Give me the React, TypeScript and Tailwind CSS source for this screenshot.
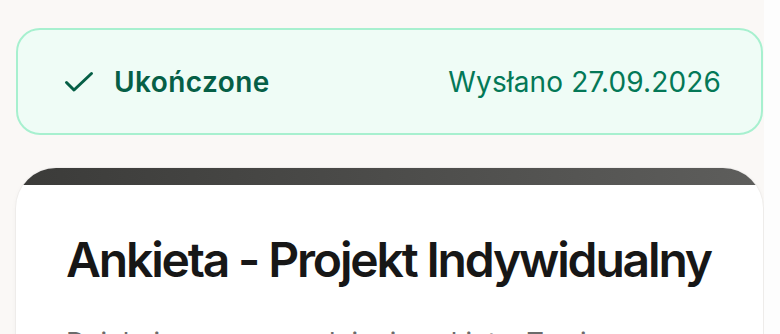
const FONT = "font-['Inter','Noto_Sans',sans-serif]";

function CheckMark() {
  return (
    <svg width="30" height="22" viewBox="0 0 30 22" fill="none" className="shrink-0">
      <path d="M2.5 11.5 10 19 27.5 2.5" stroke="#065f46" strokeWidth="3" strokeLinecap="round" strokeLinejoin="round" />
    </svg>
  );
}

function StatusBanner() {
  return (
    <div className="flex h-[107px] items-center justify-between rounded-[24px] border-2 border-[#a7f0cf] bg-[#effcf6] pl-[46px] pr-[40px]">
      <div className="flex items-center gap-[20px]">
        <CheckMark />
        <span className="text-[28px] font-semibold tracking-[0.015em] text-[#065f46]">Ukończone</span>
      </div>
      <span className="text-[28px] tracking-[0.005em] text-[#047857]">Wysłano 27.09.2026</span>
    </div>
  );
}

function SurveyCard() {
  return (
    <div className="mt-[33px] overflow-hidden rounded-[40px] bg-white shadow-[0_0_0_1px_rgba(0,0,0,0.03),0_2px_6px_rgba(0,0,0,0.04)]">
      <div className="h-[17px] bg-gradient-to-r from-[#3b3b39] to-[#5e5e5c]" />
      <div className="px-[50px] pt-[46px]">
        <h1 className="whitespace-nowrap text-[48px] font-semibold leading-[1.2] tracking-[-0.045em] text-[#171717]">
          Ankieta - Projekt Indywidualny
        </h1>
        <p className="mt-[34px] text-[27px] leading-[1.5] text-[#6b6b6b]">
          Dziękujemy za wypełnienie ankiety. Twoje odpowiedzi zostały zapisane.
        </p>
      </div>
    </div>
  );
}

export default function App() {
  return (
    <div className={`flex h-[334px] overflow-hidden bg-[#faf8f6] ${FONT}`}>
      <div className="min-w-0 flex-1 pl-4 pr-[1px] pt-7">
        <StatusBanner />
        <SurveyCard />
      </div>
      <div className="w-4 shrink-0 bg-[#fdfdfd]" />
    </div>
  );
}
